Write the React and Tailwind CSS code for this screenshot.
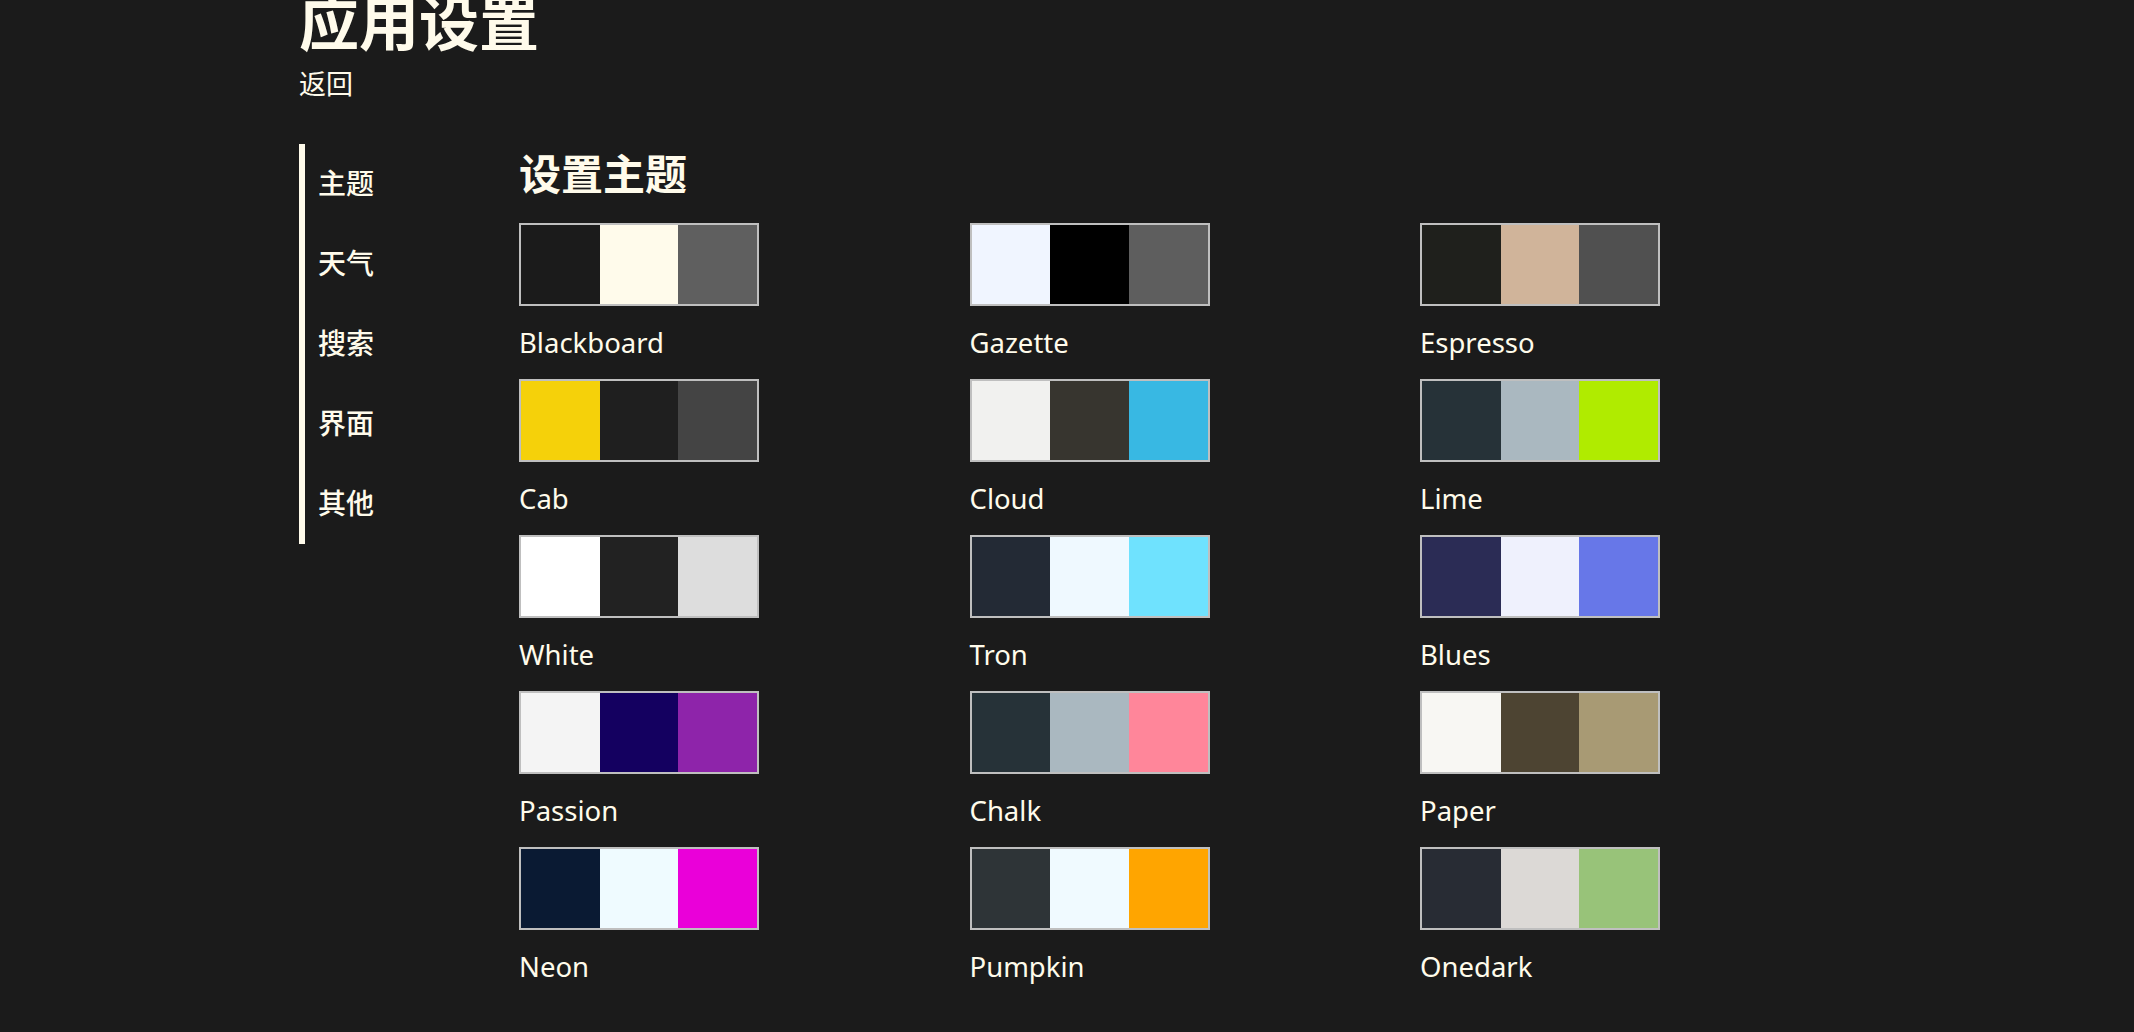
const THEMES = [
  { name: 'Blackboard', colors: ['#1b1b1b', '#fffbeb', '#5f5f5f'] },
  { name: 'Gazette', colors: ['#f0f5ff', '#000000', '#5e5e5e'] },
  { name: 'Espresso', colors: ['#1f201c', '#d0b49a', '#505050'] },
  { name: 'Cab', colors: ['#f5d10a', '#1f1f1f', '#444444'] },
  { name: 'Cloud', colors: ['#f1f1ef', '#37352f', '#38b8e3'] },
  { name: 'Lime', colors: ['#263238', '#aab8c0', '#b0eb00'] },
  { name: 'White', colors: ['#ffffff', '#222222', '#dddddd'] },
  { name: 'Tron', colors: ['#232a35', '#eff9ff', '#6fe2fe'] },
  { name: 'Blues', colors: ['#2b2c55', '#eff1fd', '#6777e8'] },
  { name: 'Passion', colors: ['#f4f4f4', '#140060', '#8e24aa'] },
  { name: 'Chalk', colors: ['#263238', '#aab8c0', '#ff869a'] },
  { name: 'Paper', colors: ['#f8f7f3', '#4d4432', '#a89a74'] },
  { name: 'Neon', colors: ['#0a1a33', '#effbff', '#ea00d9'] },
  { name: 'Pumpkin', colors: ['#2e3437', '#f0faff', '#ffa500'] },
  { name: 'Onedark', colors: ['#282c34', '#dcd9d6', '#98c379'] },
]

const MENU = ['主题', '天气', '搜索', '界面', '其他']

export default function App() {
  return (
    <div className="min-h-screen overflow-hidden bg-[#1b1b1b] text-[#fffbeb]">
      <div className="pl-[299px]">
        {/* 标题 */}
        <h1 className="-mt-[10px] font-['Noto_Sans_CJK_SC',sans-serif] text-[60px] font-bold leading-[60px]">
          应用设置
        </h1>
        <div className="mt-[13px] font-['Noto_Sans_CJK_SC',sans-serif] text-[27px] leading-[40px]">
          返回
        </div>

        <div className="mt-[41px] flex">
          {/* 侧边菜单 */}
          <nav className="w-[220px] shrink-0">
            <ul className="w-fit border-l-[6px] border-[#fffbeb]">
              {MENU.map((m) => (
                <li
                  key={m}
                  className="flex h-[80px] items-center pb-[5px] pl-[13px] font-['Noto_Sans_CJK_SC',sans-serif] text-[28px] font-medium"
                >
                  {m}
                </li>
              ))}
            </ul>
          </nav>

          {/* 主题列表 */}
          <main>
            <h2 className="mb-[23px] font-['Noto_Sans_CJK_SC',sans-serif] text-[42px] font-bold leading-[56px]">
              设置主题
            </h2>
            <div className="grid grid-cols-[repeat(3,450.5px)] gap-y-[18px]">
              {THEMES.map((t) => (
                <ThemeCard key={t.name} theme={t} />
              ))}
            </div>
          </main>
        </div>
      </div>
    </div>
  )
}

function ThemeCard({ theme }) {
  return (
    <div className="cursor-pointer">
      <div className="flex h-[83px] w-[240px] border-2 border-[#bfbfbf]">
        {theme.colors.map((c, i) => (
          <div key={i} className="flex-1" style={{ backgroundColor: c }} />
        ))}
      </div>
      <div className="mt-[19px] font-['Noto_Sans',sans-serif] text-[27.5px] leading-[36px]">
        {theme.name}
      </div>
    </div>
  )
}
